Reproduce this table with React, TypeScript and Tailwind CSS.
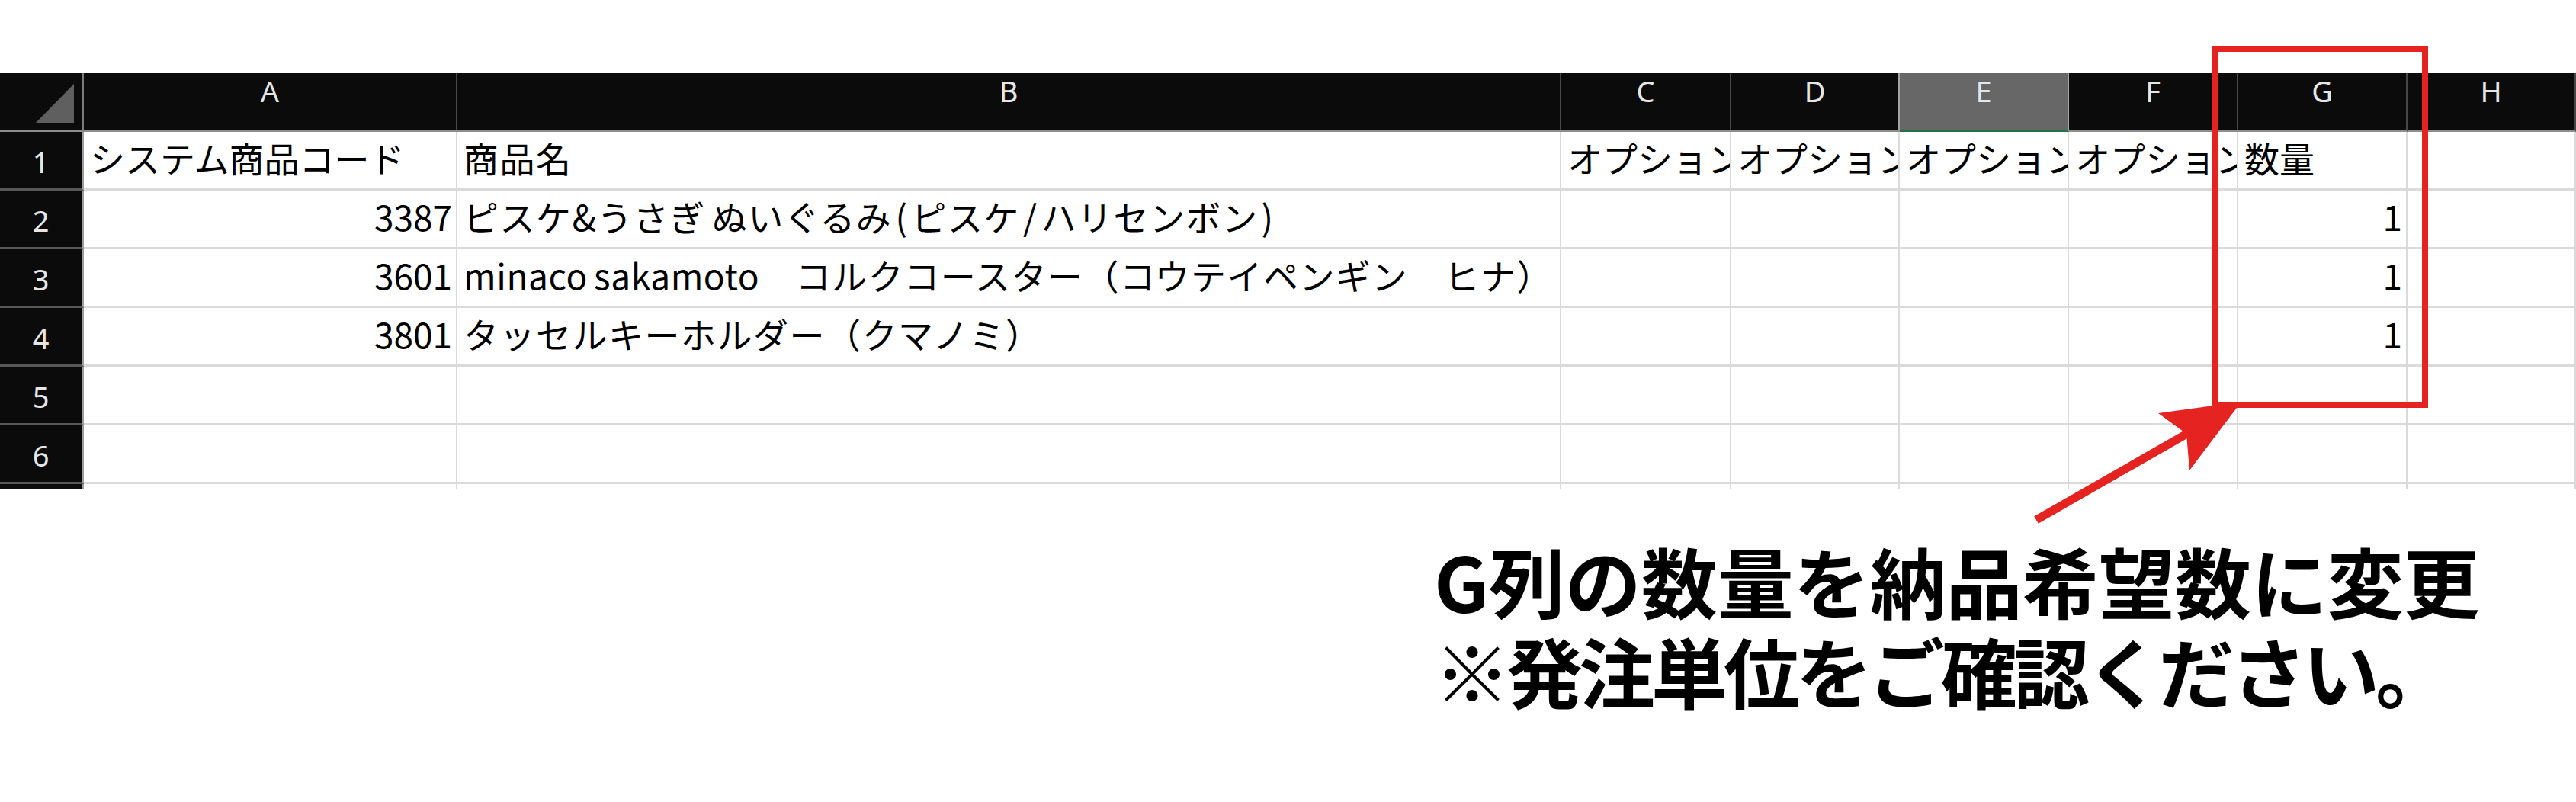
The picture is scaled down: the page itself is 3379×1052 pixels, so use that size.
import type { ReactNode } from 'react';

type Col = {
  label: string;
  width: string;
  head: string;
};

const cols: Col[] = [
  { label: 'A', width: 'w-[490px]', head: 'border-r-[#474747]' },
  { label: 'B', width: 'w-[1448px]', head: 'border-r-[#474747]' },
  { label: 'C', width: 'w-[223px]', head: 'border-r-[#474747]' },
  { label: 'D', width: 'w-[221px]', head: 'border-r-[#a3a3a3]' },
  { label: 'E', width: 'w-[222px]', head: 'border-r-[#a3a3a3] bg-[#676767] border-b-[#217346]' },
  { label: 'F', width: 'w-[222px]', head: 'border-r-[#474747]' },
  { label: 'G', width: 'w-[222px]', head: 'border-r-[#474747]' },
  { label: 'H', width: 'w-[221px]', head: 'border-r-[#474747]' },
];

type Cell = { text?: string; right?: boolean };

const rows: Cell[][] = [
  [
    { text: 'システム商品コード' },
    { text: '商品名' },
    { text: 'オプション' },
    { text: 'オプション' },
    { text: 'オプション' },
    { text: 'オプション' },
    { text: '数量' },
    {},
  ],
  [
    { text: '3387', right: true },
    { text: 'ピスケ&うさぎ ぬいぐるみ(ピスケ/ハリセンボン)' },
    {},
    {},
    {},
    {},
    { text: '1', right: true },
    {},
  ],
  [
    { text: '3601', right: true },
    { text: 'minaco sakamoto　コルクコースター（コウテイペンギン　ヒナ）' },
    {},
    {},
    {},
    {},
    { text: '1', right: true },
    {},
  ],
  [
    { text: '3801', right: true },
    { text: 'タッセルキーホルダー（クマノミ）' },
    {},
    {},
    {},
    {},
    { text: '1', right: true },
    {},
  ],
  [{}, {}, {}, {}, {}, {}, {}, {}],
  [{}, {}, {}, {}, {}, {}, {}, {}],
];

// the sheet font sets punctuation and latin a little wider than Noto does
function CellText({ text }: { text: string }) {
  const parts = text.split(/([()/ ]|[a-z]+)/).filter((p) => p !== '');
  return (
    <>
      {parts.map((p, i) => {
        if (/^[()/ ]$/.test(p)) {
          return (
            <span key={i} className="px-[4px]">
              {p}
            </span>
          );
        }
        if (/^[a-z]+$/.test(p)) {
          return (
            <span key={i} className="tracking-[0.6px]">
              {p}
            </span>
          );
        }
        return <span key={i}>{p}</span>;
      })}
    </>
  );
}

function RowHead({ children }: { children?: ReactNode }) {
  return (
    <div className="flex w-[110px] shrink-0 items-center justify-center border-r-[3px] border-b-[3px] border-r-[#9d9d9d] border-b-[#575757] bg-[#0b0b0b] pt-[4px] font-['Noto_Sans',sans-serif] text-[38px] leading-[38px] text-[#e6e6e6]">
      {children}
    </div>
  );
}

export default function App() {
  return (
    <div className="relative h-[1052px] w-[3379px] overflow-hidden bg-white pt-[96px]">
      {/* sheet */}
      <div className="flex flex-col">
        <div className="flex h-[77px]">
          <div className="relative w-[110px] shrink-0 border-r-[3px] border-b-[3px] border-r-[#7b7b7b] border-b-[#8e8e8e] bg-[#0b0b0b]">
            <svg className="absolute left-0 top-0" width="107" height="74" viewBox="0 0 107 74">
              <polygon points="47,65 97,14 97,65" fill="#5f5f5f" />
            </svg>
          </div>
          {cols.map((c) => (
            <div
              key={c.label}
              className={`flex shrink-0 justify-center border-r-2 border-b-[3px] border-b-[#8e8e8e] bg-[#0b0b0b] pt-[4px] font-['Noto_Sans',sans-serif] text-[38px] leading-[38px] text-[#e6e6e6] ${c.width} ${c.head}`}
            >
              {c.label}
            </div>
          ))}
        </div>

        {rows.map((r, i) => (
          <div key={i} className="flex h-[77px]">
            <RowHead>{i + 1}</RowHead>
            {r.map((cell, j) => (
              <div
                key={j}
                className={`flex shrink-0 items-center overflow-hidden whitespace-nowrap border-r-2 border-b-[3px] border-[#dadada] bg-white pb-[8px] font-['Noto_Sans_CJK_JP',sans-serif] text-[46px] leading-[46px] text-black ${cols[j].width} ${cell.right ? 'justify-end pr-[5px]' : 'pl-[8px]'} ${j === 1 ? 'tracking-[1.5px]' : ''}`}
              >
                {cell.text && <CellText text={cell.text} />}
              </div>
            ))}
          </div>
        ))}

        <div className="flex h-[7px]">
          <div className="w-[110px] shrink-0 border-r-[3px] border-r-[#9d9d9d] bg-[#0b0b0b]" />
          {cols.map((c) => (
            <div key={c.label} className={`shrink-0 border-r-2 border-[#dadada] ${c.width}`} />
          ))}
        </div>
      </div>

      {/* note */}
      <div className="ml-[1881px] mt-[60px] whitespace-nowrap font-['Noto_Sans_CJK_JP',sans-serif] text-[100px] font-bold leading-[118px] text-black">
        <div>G列の数量を納品希望数に変更</div>
        <div className="tracking-[-5px]">※発注単位をご確認ください。</div>
      </div>

      {/* red annotation */}
      <div className="absolute left-[2901px] top-[60px] h-[475px] w-[284px] border-[8px] border-[#e52421]" />
      <svg className="absolute left-0 top-0" width="3379" height="1052" viewBox="0 0 3379 1052">
        <line x1="2671" y1="682" x2="2872" y2="567" stroke="#e52421" strokeWidth="11" />
        <polygon points="2940,527 2831,542 2868,569 2872,617" fill="#e52421" />
      </svg>
    </div>
  );
}
